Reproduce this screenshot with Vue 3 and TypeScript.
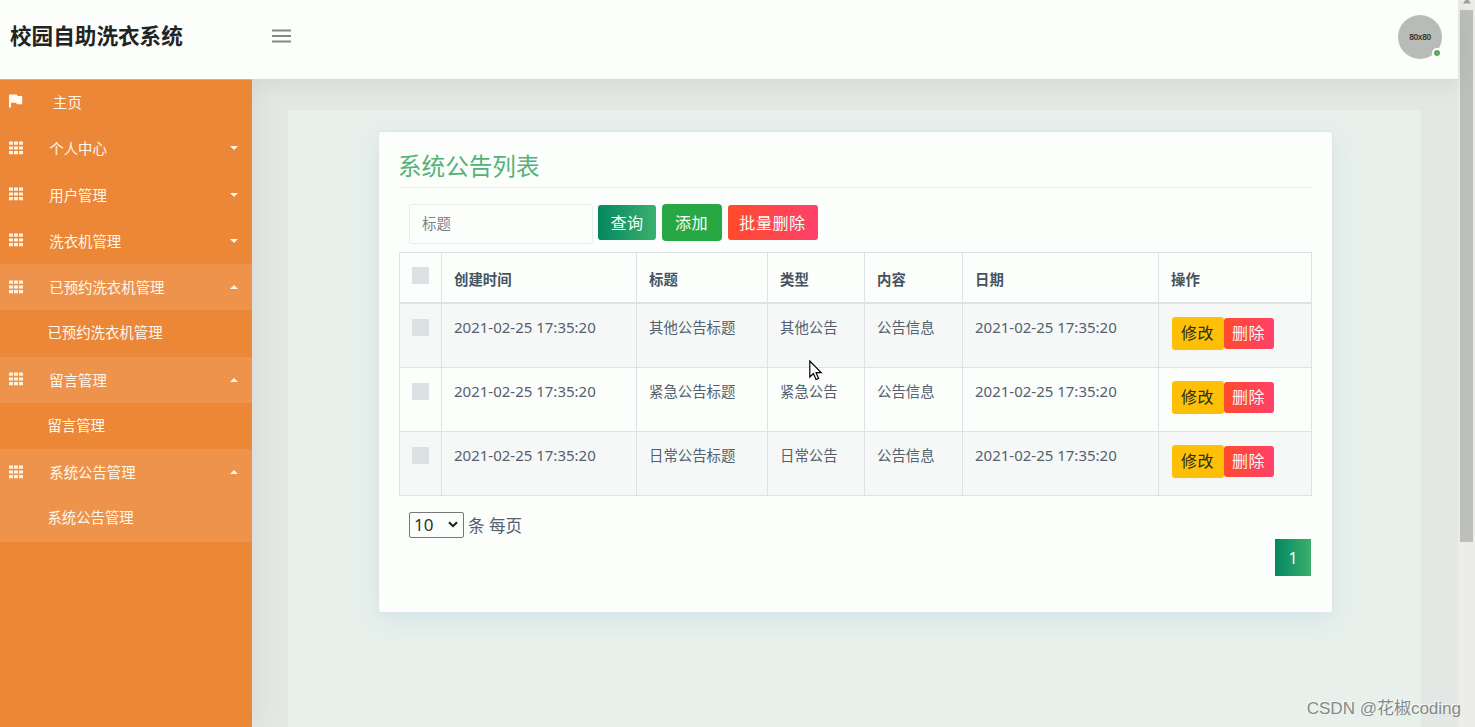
<script setup lang="ts">
import { ref } from 'vue'

interface MenuRow {
  label: string
  kind: 'home' | 'group' | 'child'
  open?: boolean
  light?: boolean
}

interface Notice {
  created: string
  title: string
  type: string
  content: string
  date: string
}

const menu: MenuRow[] = [
  { label: '主页', kind: 'home' },
  { label: '个人中心', kind: 'group' },
  { label: '用户管理', kind: 'group' },
  { label: '洗衣机管理', kind: 'group' },
  { label: '已预约洗衣机管理', kind: 'group', open: true, light: true },
  { label: '已预约洗衣机管理', kind: 'child' },
  { label: '留言管理', kind: 'group', open: true, light: true },
  { label: '留言管理', kind: 'child' },
  { label: '系统公告管理', kind: 'group', open: true, light: true },
  { label: '系统公告管理', kind: 'child', light: true },
]

const stamp = '2021-02-25 17:35:20'
const columns = ['创建时间', '标题', '类型', '内容', '日期', '操作']
const notices: Notice[] = [
  { created: stamp, title: '其他公告标题', type: '其他公告', content: '公告信息', date: stamp },
  { created: stamp, title: '紧急公告标题', type: '紧急公告', content: '公告信息', date: stamp },
  { created: stamp, title: '日常公告标题', type: '日常公告', content: '公告信息', date: stamp },
]

const pageSize = ref('10')
const keyword = ref('')
</script>

<template>
  <div class="screen">
    <div class="page">
      <header class="topbar">
        <div class="brand">校园自助洗衣系统</div>
        <svg class="burger" width="19" height="14" viewBox="0 0 19 14">
          <path d="M0 1.5h19M0 7h19M0 12.5h19" stroke="#858785" stroke-width="1.9" />
        </svg>
        <div class="avatar">
          <span>80x80</span>
          <i class="status"></i>
        </div>
      </header>

      <div class="body">
        <nav class="sidebar">
          <div v-for="(row, i) in menu" :key="i" class="row" :class="[row.kind, { light: row.light }]">
            <svg v-if="row.kind === 'home'" class="icon" width="14" height="14" viewBox="0 0 14 14">
              <path d="M0 0.5h8l.6 1.6H13.2v8.2H7.8L7.2 8.7H2V13.5H0z" fill="#fffaf3" />
            </svg>
            <svg v-else-if="row.kind === 'group'" class="icon" width="14" height="14" viewBox="0 0 14 14">
              <path
                d="M0 .6h4v3.2H0zM5 .6h4v3.2H5zM10 .6h4v3.2h-4zM0 5.4h4v3.2H0zM5 5.4h4v3.2H5zM10 5.4h4v3.2h-4zM0 10.1h4v3.2H0zM5 10.1h4v3.2H5zM10 10.1h4v3.2h-4z"
                fill="#fff5e6"
              />
            </svg>
            <span class="label">{{ row.label }}</span>
            <svg v-if="row.kind === 'group'" class="caret" width="8" height="4" viewBox="0 0 8 4">
              <path :d="row.open ? 'M0 4L4 0L8 4z' : 'M0 0H8L4 4z'" fill="#fff7ec" />
            </svg>
          </div>
        </nav>

        <main class="content">
          <div class="panel">
            <section class="card">
              <h3>系统公告列表</h3>
              <div class="tools">
                <input v-model="keyword" class="search" type="text" placeholder="标题" />
                <button class="btn green">查询</button>
                <button class="btn add">添加</button>
                <button class="btn red">批量删除</button>
              </div>
              <table>
                <colgroup>
                  <col class="c0" /><col class="c1" /><col class="c2" /><col class="c3" />
                  <col class="c4" /><col class="c5" /><col class="c6" />
                </colgroup>
                <thead>
                  <tr>
                    <th><i class="check"></i></th>
                    <th v-for="c in columns" :key="c">{{ c }}</th>
                  </tr>
                </thead>
                <tbody>
                  <tr v-for="n in notices" :key="n.title">
                    <td><i class="check"></i></td>
                    <td class="time">{{ n.created }}</td>
                    <td>{{ n.title }}</td>
                    <td>{{ n.type }}</td>
                    <td>{{ n.content }}</td>
                    <td class="time">{{ n.date }}</td>
                    <td>
                      <div class="actions">
                        <button class="small edit">修改</button>
                        <button class="small remove">删除</button>
                      </div>
                    </td>
                  </tr>
                </tbody>
              </table>
              <div class="sizer">
                <span class="select-box">
                  <select v-model="pageSize">
                    <option>10</option>
                    <option>25</option>
                    <option>50</option>
                  </select>
                  <svg width="10" height="7" viewBox="0 0 10 7">
                    <path d="M1 1.2L5 5.2L9 1.2" fill="none" stroke="#1b1b1b" stroke-width="2" />
                  </svg>
                </span>
                <span>条 每页</span>
              </div>
              <div class="pager"><button>1</button></div>
            </section>
          </div>
        </main>
      </div>
    </div>

    <div class="scrollbar">
      <svg width="8" height="4" viewBox="0 0 8 4"><path d="M2.5 0h3L8 3.5H0z" fill="#a0a29f" /></svg>
      <div class="thumb"></div>
    </div>

    <svg class="pointer" width="14" height="22" viewBox="0 0 14 22">
      <path
        d="M.8 1V17L4.4 13.6L7 19.5L9.6 18.4L7.1 12.7H12.2z"
        fill="#fff"
        stroke="#000"
        stroke-width="1.2"
      />
    </svg>
    <div class="watermark">CSDN @花椒coding</div>
  </div>
</template>

<style>
body {
  overflow: hidden;
}
</style>

<style scoped>
* {
  box-sizing: border-box;
}
.screen {
  position: relative;
  display: flex;
  width: 1475px;
  height: 727px;
  overflow: hidden;
  background: #e5e7e4;
  color: #526070;
  font-family: 'Noto Sans', 'Noto Sans CJK SC', sans-serif;
  font-size: 14.4px;
}
button,
input,
select {
  font-family: inherit;
  margin: 0;
}
.page {
  flex: 1;
  display: flex;
  flex-direction: column;
}
.topbar {
  position: relative;
  z-index: 2;
  display: flex;
  align-items: center;
  height: 80px;
  flex: none;
  padding: 0 16px 7px 10px;
  background: #fcfefb;
  border-bottom: 1px solid #dcdddb;
  box-shadow: 0 4px 26px rgba(0, 0, 0, 0.07);
}
.brand {
  width: 262px;
  color: #222423;
  font-size: 21.6px;
  font-weight: 700;
  line-height: 30px;
}
.burger {
  display: block;
}
.avatar {
  position: relative;
  display: flex;
  align-items: center;
  justify-content: center;
  width: 44px;
  height: 44px;
  margin-left: auto;
  margin-top: 1px;
  border-radius: 50%;
  background: #b9bbb8;
  color: #3c3e3c;
  font: 700 8.5px 'Liberation Sans', sans-serif;
  letter-spacing: -0.4px;
}
.status {
  position: absolute;
  right: 0;
  bottom: 1px;
  width: 10px;
  height: 10px;
  border: 2px solid #fcfefb;
  border-radius: 50%;
  background: #64a663;
}
.body {
  flex: 1;
  display: flex;
  margin-top: -1px;
}
.sidebar {
  width: 252px;
  flex: none;
  background: #eb8736;
  border-top: 1px solid #e9ab78;
  box-shadow: 0 0 30px rgba(0, 0, 0, 0.07);
  clip-path: inset(0 -40px -40px 0);
  position: relative;
  z-index: 3;
}
.row {
  display: flex;
  align-items: center;
  height: 46.25px;
  padding: 0 14px 0 9.4px;
  color: #fff8ee;
}
.row:first-child {
  height: 45.25px;
}
.light {
  background: #ed934b;
}
.icon {
  margin-right: 25.9px;
  margin-top: -1px;
}
.home .icon {
  margin-right: 29.6px;
  margin-top: -3px;
}
.label {
  margin-top: 2px;
  line-height: 20px;
  white-space: nowrap;
}
.home .label {
  margin-top: 0;
}
.child {
  padding-left: 47.4px;
}
.child .label {
  margin-top: 0;
}
.caret {
  margin-left: auto;
}
.content {
  flex: 1;
  padding: 31px 37px 0 36px;
}
.panel {
  height: 617px;
  padding: 21px 88px 0 90px;
  background: #e7f0eb;
}
.card {
  height: 482px;
  padding: 20px 20px 0;
  border: 1px solid #dce6e8;
  border-radius: 3px;
  background: #fcfefb;
  box-shadow: 0 6px 20px rgba(190, 209, 230, 0.42);
}
h3 {
  margin: 0 0 16px;
  height: 36px;
  border-bottom: 1px solid #ecefed;
  color: #53b277;
  font-size: 23.6px;
  font-weight: 400;
  line-height: 28px;
  text-indent: -1px;
}
.tools {
  display: flex;
  align-items: flex-start;
  height: 48px;
  padding-left: 10px;
}
.search {
  width: 184px;
  height: 40px;
  padding: 0 12px 1px;
  border: 1px solid #e5f0ea;
  border-radius: 3px;
  background: transparent;
  font-size: 14.4px;
}
.search::placeholder {
  color: #7a828a;
  opacity: 1;
}
.btn {
  height: 35px;
  margin-top: 1px;
  padding: 0;
  border: 0;
  border-radius: 3px;
  color: #f4fff7;
  font-size: 16.1px;
  letter-spacing: 0.5px;
  line-height: 36px;
}
.green {
  width: 58px;
  margin-left: 5px;
  background: linear-gradient(90deg, #048761, #3bb06e);
}
.add {
  width: 60px;
  height: 37px;
  margin: 0 6px 0;
  padding-right: 1px;
  border-radius: 4px;
  background: #28a745;
}
.red {
  width: 90px;
  padding-right: 1px;
  background: linear-gradient(90deg, #ff4b2b, #ff416c);
}
table {
  width: 913px;
  table-layout: fixed;
  border-collapse: separate;
  border-spacing: 0;
  border-top: 1px solid #dee2e6;
  border-left: 1px solid #dee2e6;
}
.c0 { width: 42px; }
.c1 { width: 195px; }
.c2 { width: 131px; }
.c3 { width: 97px; }
.c4 { width: 98px; }
.c5 { width: 196px; }
.c6 { width: 153px; }
th,
td {
  padding: 0 0 0 12px;
  border-right: 1px solid #dee2e6;
  border-bottom: 1px solid #dee2e6;
  text-align: left;
  vertical-align: top;
  line-height: 22px;
  white-space: nowrap;
}
th {
  height: 51px;
  padding-top: 16px;
  border-bottom-width: 2px;
  color: #46535f;
  font-weight: 700;
}
td {
  height: 64px;
  padding-top: 13px;
}
tbody tr:nth-child(odd) {
  background: #f6f8f7;
}
.time {
  font-size: 15px;
  line-height: 20px;
}
.check {
  display: block;
  width: 17px;
  height: 17px;
  background: #dce1e4;
}
th .check {
  margin-top: -2px;
}
td .check {
  margin-top: 2px;
}
.actions {
  display: flex;
  align-items: center;
  height: 33px;
  padding-left: 1px;
}
.small {
  padding: 0 1px 3px 0;
  border: 0;
  border-radius: 3px;
  font-size: 16px;
  letter-spacing: 0.4px;
}
.edit {
  width: 52px;
  height: 33px;
  background: #fdc007;
  color: #2b2b20;
}
.remove {
  width: 50px;
  height: 31px;
  background: linear-gradient(90deg, #ff4b2b, #ff416c);
  color: #fff2ef;
}
.sizer {
  display: flex;
  align-items: center;
  gap: 4px;
  height: 26px;
  margin: 16px 0 0 10px;
  font-size: 16.6px;
}
.select-box {
  position: relative;
  width: 55px;
  height: 26px;
}
select {
  width: 100%;
  height: 100%;
  padding: 0 0 1px 4px;
  appearance: none;
  border: 1px solid #767876;
  border-radius: 2px;
  background: transparent;
  color: #303234;
  font-size: 17px;
}
.select-box svg {
  position: absolute;
  right: 6px;
  top: 9px;
}
.pager {
  display: flex;
  justify-content: flex-end;
  padding: 1px 1px 0 0;
}
.pager button {
  width: 36px;
  height: 37px;
  padding: 0;
  border: 0;
  background: linear-gradient(90deg, #048761, #3bb06e);
  color: #f1fff7;
  font-size: 16px;
}
.scrollbar {
  width: 18px;
  flex: none;
  padding-left: 2px;
  background: #ecedeb;
}
.scrollbar svg {
  display: block;
  margin: 0 0 6px 3px;
}
.thumb {
  width: 13px;
  height: 532px;
  background: #bdbfbc;
}
.pointer {
  position: absolute;
  left: 809px;
  top: 360px;
}
.watermark {
  position: absolute;
  right: 14px;
  bottom: 6px;
  z-index: 5;
  color: #858a87;
  font: 17px/24px 'Liberation Sans', 'Noto Sans CJK SC', sans-serif;
  text-shadow: -1px -1px 0 #fafcfa;
  white-space: nowrap;
}
</style>
